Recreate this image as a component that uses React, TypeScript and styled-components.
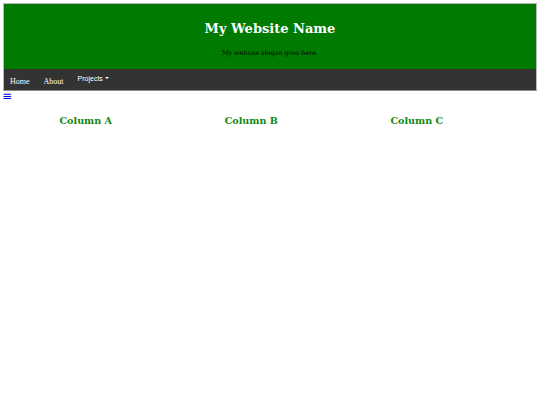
import React from "react";
import styled, { createGlobalStyle } from "styled-components";

const GlobalStyle = createGlobalStyle`
  html, body {
    margin: 0;
    padding: 0;
    background: #ffffff;
  }
  body {
    padding: 3px;
    font-family: "DejaVu Serif", serif;
  }
`;

const Wrapper = styled.div`
  border: 1px solid #b8b8b8;
  border-bottom-color: #8a8a8a;
`;

const Header = styled.header`
  background-color: #007a00;
  height: 65px;
  display: flex;
  flex-direction: column;
  align-items: center;
  padding-top: 17px;
  box-sizing: border-box;
`;

const Title = styled.h1`
  margin: 0;
  color: #ffffff;
  font-size: 13px;
  font-weight: bold;
`;

const Slogan = styled.p`
  margin: 13px 0 0;
  color: #000000;
  font-size: 6.4px;
`;

const Nav = styled.nav`
  background-color: #333333;
  height: 21px;
  display: flex;
  align-items: center;
  padding-left: 6px;
  gap: 14px;
`;

const NavItem = styled.span`
  color: #ffffff;
  font-family: "Liberation Serif", serif;
  font-size: 8px;
  padding-top: 3px;
  cursor: pointer;
`;

const DropButton = styled.button`
  background: none;
  border: none;
  color: #ffffff;
  font-family: "Liberation Sans", Arial, sans-serif;
  font-size: 7px;
  padding: 0;
  margin-top: -3px;
  display: flex;
  align-items: center;
  gap: 2px;
`;

const Caret = styled.span`
  width: 0;
  height: 0;
  border-left: 2.5px solid transparent;
  border-right: 2.5px solid transparent;
  border-top: 2.5px solid #ffffff;
`;

const Burger = styled.a`
  display: block;
  color: #0000ee;
  font-family: "DejaVu Sans", sans-serif;
  font-size: 12px;
  line-height: 10px;
  margin-left: -1px;
  text-decoration: none;
`;

const Columns = styled.div`
  display: flex;
  padding-top: 14px;
`;

const Column = styled.div`
  width: 31%;
  text-align: center;
`;

const ColumnTitle = styled.h2`
  margin: 0;
  color: #118811;
  font-size: 9.6px;
  font-weight: bold;
`;

export default function App() {
  return (
    <>
      <GlobalStyle />
      <Wrapper>
        <Header>
          <Title>My Website Name</Title>
          <Slogan>My website slogan goes here.</Slogan>
        </Header>
        <Nav>
          <NavItem>Home</NavItem>
          <NavItem>About</NavItem>
          <DropButton>
            Projects <Caret />
          </DropButton>
        </Nav>
      </Wrapper>
      <Burger href="#">≡</Burger>
      <Columns>
        <Column>
          <ColumnTitle>Column A</ColumnTitle>
        </Column>
        <Column>
          <ColumnTitle>Column B</ColumnTitle>
        </Column>
        <Column>
          <ColumnTitle>Column C</ColumnTitle>
        </Column>
      </Columns>
    </>
  );
}
